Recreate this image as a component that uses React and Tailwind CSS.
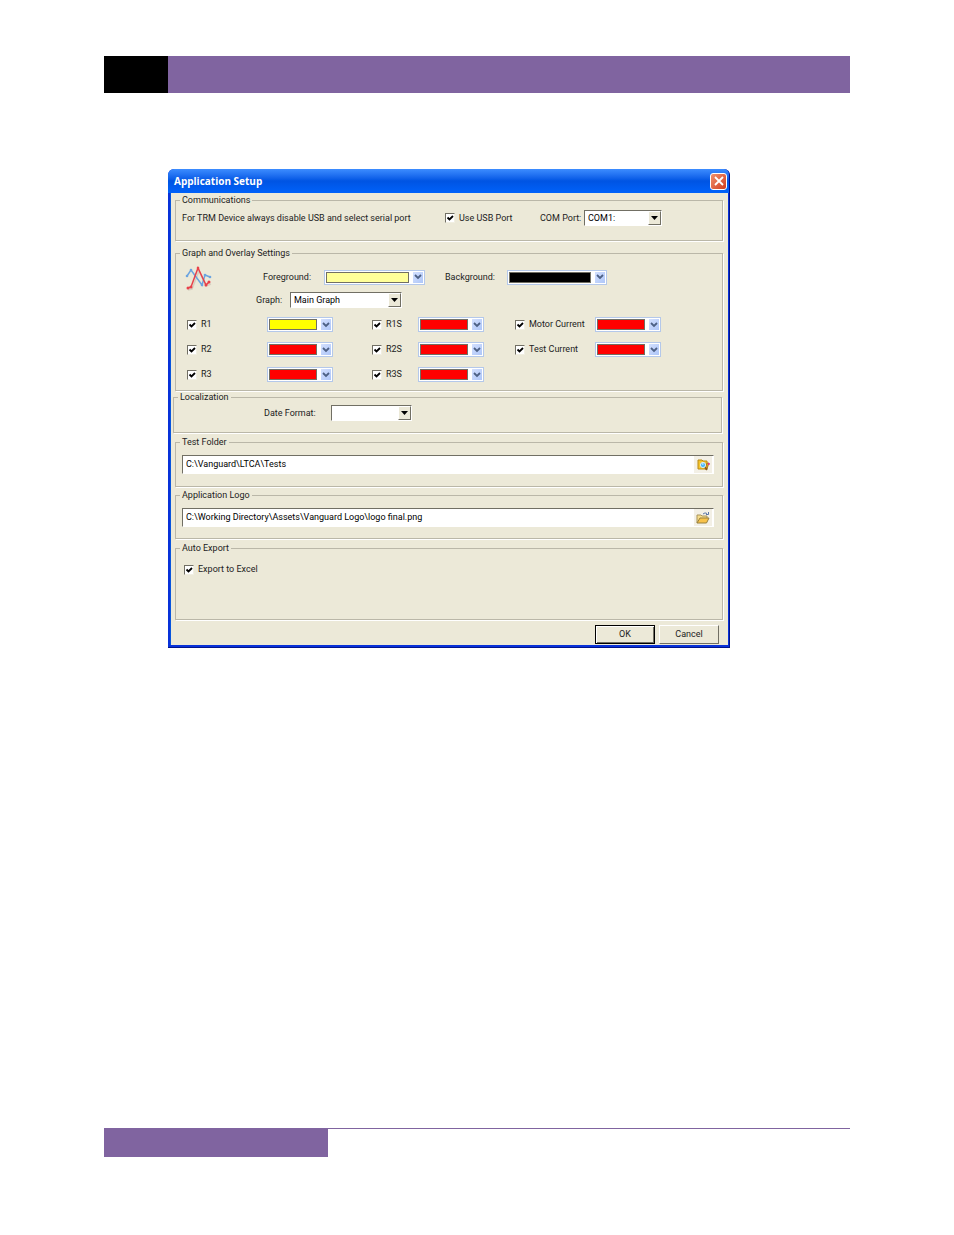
import { useState } from 'react';

const traces = [
  { name: 'R1', color: 'yellow' },
  { name: 'R1S', color: 'red' },
  { name: 'Motor Current', color: 'red' },
  { name: 'R2', color: 'red' },
  { name: 'R2S', color: 'red' },
  { name: 'Test Current', color: 'red' },
  { name: 'R3', color: 'red' },
  { name: 'R3S', color: 'red' },
];

const colors = {
  yellow: 'bg-[#ffff00]',
  red: 'bg-[#ff0000]',
  black: 'bg-black',
  cream: 'bg-[#ffff99]',
};

const Group = ({ title, className, children }) => (
  <fieldset className={`border border-[#bab7a8] shadow-[1px_1px_0_#fff] min-w-0 ${className}`}>
    <legend className="ml-1 px-[2px] leading-[11px]">{title}</legend>
    {children}
  </fieldset>
);

const Checkbox = ({ label, checked, onChange }) => (
  <label className="flex items-center gap-1">
    <span className="grid shrink-0">
      <input
        type="checkbox"
        checked={checked}
        onChange={onChange}
        className="[grid-area:1/1] appearance-none w-[10px] h-[10px] bg-white border border-t-[#716f64] border-l-[#716f64] border-r-[#f1efe2] border-b-[#f1efe2]"
      />
      {checked && (
        <svg viewBox="0 0 10 10" className="[grid-area:1/1] w-[10px] h-[10px] pointer-events-none">
          <path d="M2.5 4.5 L4.5 6.5 L8 3" fill="none" stroke="#000" strokeWidth="1.8" />
        </svg>
      )}
    </span>
    {label}
  </label>
);

const ColorPicker = ({ label, value, onChange, className }) => (
  <div className={`grid h-[15px] ${className}`}>
    <div className="[grid-area:1/1] flex bg-white border border-[#b4c8ea] p-px">
      <div className={`flex-1 border border-[#716f64] ${colors[value]}`} />
      <div className="ml-1 w-[10px] flex items-center justify-center bg-linear-to-br from-[#d3e0fe] to-[#aec6f8]">
        <svg viewBox="0 0 8 6" className="w-2 h-[6px]">
          <path d="M1 1 L4 4 L7 1" fill="none" stroke="#4d6185" strokeWidth="1.8" />
        </svg>
      </div>
    </div>
    <select
      aria-label={label}
      value={value}
      onChange={onChange}
      className="[grid-area:1/1] opacity-0 min-w-0"
    >
      {Object.keys(colors).map((c) => (
        <option key={c}>{c}</option>
      ))}
    </select>
  </div>
);

const Combo = ({ id, options, className }) => (
  <div className={`grid h-4 ${className}`}>
    <select
      id={id}
      className="[grid-area:1/1] min-w-0 appearance-none bg-white text-black px-[3px] border border-t-[#716f64] border-l-[#716f64] border-r-white border-b-white"
    >
      {options.map((o) => (
        <option key={o}>{o}</option>
      ))}
    </select>
    <div className="[grid-area:1/1] justify-self-end my-px mr-px w-[13px] flex items-center justify-center bg-[#ece9d8] border border-t-white border-l-white border-r-[#716f64] border-b-[#716f64] pointer-events-none">
      <svg viewBox="0 0 7 4" className="w-[7px] h-1">
        <path d="M0 0 H7 L3.5 4 Z" fill="#000" />
      </svg>
    </div>
  </div>
);

const PathField = ({ label, value, onChange, children }) => (
  <div className="flex h-[19px] bg-white border border-t-[#716f64] border-l-[#716f64] border-r-white border-b-white">
    <input
      aria-label={label}
      value={value}
      onChange={onChange}
      className="flex-1 min-w-0 px-[3px] bg-white text-black outline-none"
    />
    <button aria-label={`Browse ${label}`} className="w-[18px] mr-px flex items-center justify-center bg-[#f3f0e6]">
      {children}
    </button>
  </div>
);

const GraphIcon = () => (
  <svg viewBox="0 0 27 26" className="w-[27px] h-[26px]" fill="none">
    <path d="M3 24 L7 23 L14 5 L21 20 L26 18" stroke="#d6d1c0" strokeWidth="1.5" />
    <path d="M2 10 L6 4 L17 19 L20 9 L25 11" stroke="#6ba4e0" strokeWidth="1.5" />
    <path d="M3 22 L6 21 L13 2 L21 19 L24 16" stroke="#e8414a" strokeWidth="1.5" />
    <g fill="#6ba4e0">
      <circle cx="2" cy="10" r="1.3" />
      <circle cx="6" cy="4" r="1.3" />
      <circle cx="17" cy="19" r="1.3" />
      <circle cx="20" cy="9" r="1.3" />
      <circle cx="25" cy="11" r="1.3" />
    </g>
    <g fill="#e8414a">
      <circle cx="3" cy="22" r="1.5" />
      <circle cx="6" cy="21" r="1.5" />
      <circle cx="13" cy="2" r="1.3" />
      <circle cx="21" cy="19" r="1.5" />
      <circle cx="24" cy="16" r="1.5" />
    </g>
  </svg>
);

const SearchFolderIcon = () => (
  <svg viewBox="0 0 13 12" className="w-[13px] h-3">
    <path d="M1 1 H5 L6 2 H10 V10 H1 Z" fill="#f5c52c" stroke="#b98a14" />
    <path d="M10 4 L12 4 L10 10 H8 Z" fill="#e09a20" stroke="#a06c10" strokeWidth="0.7" />
    <path d="M8 8 L10 11" stroke="#8a5a20" strokeWidth="1.6" />
    <circle cx="6" cy="6" r="2.6" fill="#4db8f5" stroke="#d8ecf8" />
    <path d="M5 5 H6.5" stroke="#fff" />
    <rect x="11" y="4" width="1.6" height="2" fill="#e0308a" />
  </svg>
);

const OpenFolderIcon = () => (
  <svg viewBox="0 0 14 12" className="w-[14px] h-3">
    <path d="M1 11 V3 H5 L6 4 H11 V6" fill="#f7dc8a" stroke="#a8935a" />
    <path d="M1 11 L4 6 H13 L10.5 11 Z" fill="#f8c24a" stroke="#98803e" />
    <path d="M7 2 Q9 0 11 1.5 M12.5 0 V2.5 H10" fill="none" stroke="#5b76a8" />
  </svg>
);

const App = () => {
  const [useUsb, setUseUsb] = useState(true);
  const [exportExcel, setExportExcel] = useState(true);
  const [foreground, setForeground] = useState('cream');
  const [background, setBackground] = useState('black');
  const [testFolder, setTestFolder] = useState('C:\\Vanguard\\LTCA\\Tests');
  const [logo, setLogo] = useState('C:\\Working Directory\\Assets\\Vanguard Logo\\logo final.png');
  const [rows, setRows] = useState(traces.map((t) => ({ ...t, on: true })));

  const updateRow = (index, change) => {
    setRows(rows.map((row, i) => (i === index ? { ...row, ...change } : row)));
  };

  return (
    <div className="min-h-screen bg-white flex flex-col px-[104px] pt-14 pb-[78px]">
      <header className="flex h-[37px] bg-[#8064a0]">
        <div className="w-16 bg-black" />
      </header>

      <main className="flex-1 pl-16 pt-[76px]">
        <section className="w-full max-w-[562px] rounded-t-md bg-[#0831d9] border-b border-r border-[#00138c] overflow-hidden font-[Roboto,sans-serif] text-[9px] leading-[11px] text-[#222]">
          <div className="flex items-center justify-between h-6 pl-[6px] pr-[2px] bg-linear-to-b from-[#3c8cff] via-[#0054e3] to-[#0062fa]">
            <h1 className="font-['Open_Sans',sans-serif] text-[10px] font-bold text-white">Application Setup</h1>
            <button
              aria-label="Close"
              className="w-[17px] h-[17px] flex items-center justify-center rounded-[3px] border border-white bg-linear-to-br from-[#f0906c] to-[#d0381a]"
            >
              <svg viewBox="0 0 10 10" className="w-[10px] h-[10px]">
                <path d="M1 1 L9 9 M9 1 L1 9" stroke="#fff" strokeWidth="1.8" />
              </svg>
            </button>
          </div>

          <div className="ml-[2px] mr-px mb-[2px] border-l border-[#0855dd] bg-[#ece9d8] px-[2px] pt-[2px] pb-px">
            <Group title="Communications" className="ml-[2px] mr-[3px] pb-[14px]">
              <div className="flex items-center pl-[6px] pt-1">
                <span className="w-[263px]">For TRM Device always disable USB and select serial port</span>
                <div className="w-[95px]">
                  <Checkbox label="Use USB Port" checked={useUsb} onChange={(e) => setUseUsb(e.target.checked)} />
                </div>
                <label htmlFor="com-port" className="w-11 whitespace-nowrap">COM Port:</label>
                <Combo id="com-port" options={['COM1:', 'COM2:', 'COM3:']} className="w-[78px]" />
              </div>
            </Group>

            <Group title="Graph and Overlay Settings" className="ml-[2px] mr-[3px] mt-[7px] pb-[3px]">
              <div className="flex pl-[9px] pt-[7px]">
                <GraphIcon />
                <div className="flex-1 pl-11">
                  <div className="flex items-center h-[22px] pl-[7px]">
                    <span className="w-[61px]">Foreground:</span>
                    <ColorPicker
                      label="Foreground"
                      value={foreground}
                      onChange={(e) => setForeground(e.target.value)}
                      className="w-[101px]"
                    />
                    <span className="w-[62px] ml-5">Background:</span>
                    <ColorPicker
                      label="Background"
                      value={background}
                      onChange={(e) => setBackground(e.target.value)}
                      className="w-[100px]"
                    />
                  </div>
                  <div className="flex items-center h-6">
                    <label htmlFor="graph" className="w-[34px]">Graph:</label>
                    <Combo id="graph" options={['Main Graph', 'Overlay Graph']} className="w-[112px]" />
                  </div>
                </div>
              </div>
              <div className="grid grid-cols-[185px_143px_auto] auto-rows-[25px] items-center pl-[11px]">
                {rows.map((row, i) => (
                  <div key={row.name} className="flex items-center">
                    <div className={['w-20', 'w-[46px]', 'w-20'][i % 3]}>
                      <Checkbox
                        label={row.name}
                        checked={row.on}
                        onChange={(e) => updateRow(i, { on: e.target.checked })}
                      />
                    </div>
                    <ColorPicker
                      label={`${row.name} color`}
                      value={row.color}
                      onChange={(e) => updateRow(i, { color: e.target.value })}
                      className="w-[66px]"
                    />
                  </div>
                ))}
              </div>
            </Group>

            <Group title="Localization" className="mr-1 mt-px pb-[11px]">
              <div className="flex items-center pl-[90px] pt-[2px]">
                <label htmlFor="date-format" className="w-[67px]">Date Format:</label>
                <Combo id="date-format" options={['', 'MM/DD/YYYY', 'DD/MM/YYYY']} className="w-[81px]" />
              </div>
            </Group>

            <Group title="Test Folder" className="ml-[2px] mr-[3px] mt-1 pb-3">
              <div className="pl-[6px] pr-2 pt-[7px]">
                <PathField label="Test Folder" value={testFolder} onChange={(e) => setTestFolder(e.target.value)}>
                  <SearchFolderIcon />
                </PathField>
              </div>
            </Group>

            <Group title="Application Logo" className="ml-[2px] mr-[3px] mt-[3px] pb-[11px]">
              <div className="pl-[6px] pr-2 pt-[7px]">
                <PathField label="Application Logo" value={logo} onChange={(e) => setLogo(e.target.value)}>
                  <OpenFolderIcon />
                </PathField>
              </div>
            </Group>

            <Group title="Auto Export" className="ml-[2px] mr-[3px] mt-1 pb-11">
              <div className="pl-2 pt-[10px]">
                <Checkbox
                  label="Export to Excel"
                  checked={exportExcel}
                  onChange={(e) => setExportExcel(e.target.checked)}
                />
              </div>
            </Group>

            <div className="flex justify-end gap-1 mt-[5px] mr-[7px]">
              <button className="w-[60px] h-[19px] border border-black shadow-[inset_1px_1px_0_#fff,inset_-1px_-1px_0_#716f64]">
                OK
              </button>
              <button className="w-[60px] h-[19px] border border-t-white border-l-white border-r-[#716f64] border-b-[#716f64]">
                Cancel
              </button>
            </div>
          </div>
        </section>
      </main>

      <footer className="border-t border-[#8064a0]">
        <div className="w-[30%] h-7 bg-[#8064a0]" />
      </footer>
    </div>
  );
};

export default App;
